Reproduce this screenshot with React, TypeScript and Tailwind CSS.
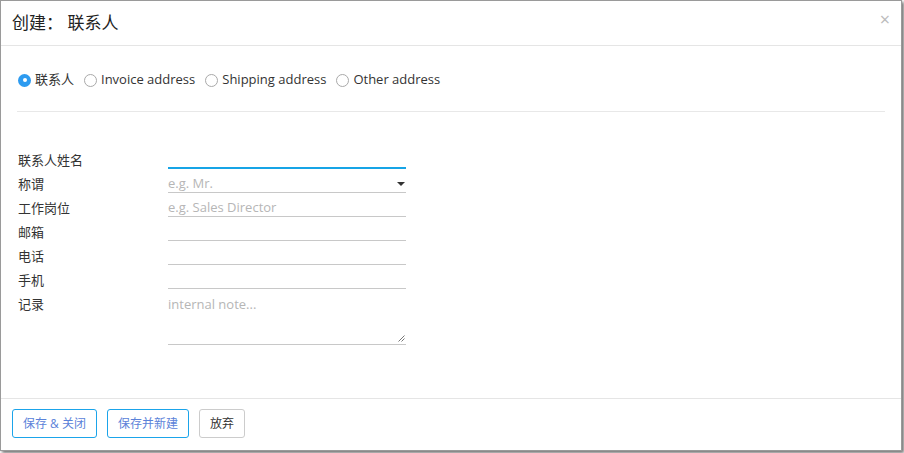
import React from "react";

const font = { fontFamily: '"Open Sans", "Noto Sans CJK SC", sans-serif' };

const Radio: React.FC<{ label: string; checked?: boolean }> = ({ label, checked }) => (
    <label className="flex items-center gap-[4px] mr-[10px]">
        {checked ? (
            <span className="w-[13px] h-[13px] rounded-full bg-[#2d9bf0] flex items-center justify-center">
                <span className="w-[4px] h-[4px] rounded-full bg-white" />
            </span>
        ) : (
            <span className="w-[13px] h-[13px] rounded-full border border-[#a9a9a9] bg-white" />
        )}
        <span>{label}</span>
    </label>
);

const Row: React.FC<{ label: string; children: React.ReactNode }> = ({ label, children }) => (
    <div className="flex">
        <div className="w-[150px] shrink-0 pt-[6px] leading-[18px]">{label}</div>
        <div className="w-[238px]">{children}</div>
    </div>
);

const Line: React.FC<{ placeholder?: string; active?: boolean; select?: boolean }> = ({
    placeholder,
    active,
    select,
}) => (
    <div
        className={
            active
                ? "h-[24px] border-b-2 border-[#16a4e6]"
                : "h-[24px] border-b border-[#c8c8c8] flex items-center justify-between pt-[6px]"
        }
    >
        {placeholder && <span className="text-[#b6b6b6]">{placeholder}</span>}
        {select && (
            <span className="w-0 h-0 border-l-[4px] border-r-[4px] border-t-[4px] border-l-transparent border-r-transparent border-t-[#333] mr-[1px]" />
        )}
    </div>
);

export default function App() {
    return (
        <div className="w-[904px] h-[453px] bg-white" style={font}>
            <div className="w-[902px] h-[451px] bg-white border border-[#9a9a9a] shadow-[2px_2px_3px_rgba(0,0,0,0.55)] flex flex-col text-[13px] text-[#333]">
                <div className="h-[45px] shrink-0 border-b border-[#e5e5e5] flex items-center justify-between pl-[11px] pr-[11px]">
                    <span className="text-[17px] text-[#222] leading-none -mt-[2px]">创建： 联系人</span>
                    <span className="text-[#bbb] text-[18px] leading-none -mt-[9px]">×</span>
                </div>
                <div className="flex-1 px-[16px]">
                    <div className="flex items-center h-[20px] mt-[24px] pl-[1px]">
                        <Radio label="联系人" checked />
                        <Radio label="Invoice address" />
                        <Radio label="Shipping address" />
                        <Radio label="Other address" />
                    </div>
                    <div className="mt-[21px] border-t border-[#e8e8e8]" />
                    <div className="mt-[33px] pl-[1px] flex flex-col">
                        <Row label="联系人姓名">
                            <Line active />
                        </Row>
                        <Row label="称谓">
                            <Line placeholder="e.g. Mr." select />
                        </Row>
                        <Row label="工作岗位">
                            <Line placeholder="e.g. Sales Director" />
                        </Row>
                        <Row label="邮箱">
                            <Line />
                        </Row>
                        <Row label="电话">
                            <Line />
                        </Row>
                        <Row label="手机">
                            <Line />
                        </Row>
                        <Row label="记录">
                            <div className="relative h-[56px] border-b border-[#c8c8c8] pt-[6px] leading-[18px] text-[#b6b6b6]">
                                internal note...
                                <svg className="absolute right-[1px] bottom-[2px]" width="7" height="7" viewBox="0 0 7 7">
                                    <path d="M6.5 0.5 L0.5 6.5 M6.5 3.5 L3.5 6.5" stroke="#777" strokeWidth="1" />
                                </svg>
                            </div>
                        </Row>
                    </div>
                </div>
                <div className="h-[52px] shrink-0 border-t border-[#e5e5e5] flex items-start gap-[10px] pl-[11px] pt-[10px] text-[12px]">
                    <button className="h-[29px] px-[10px] rounded-[3px] border border-[#1ba4ea] text-[#5b82d9] bg-white">
                        保存 &amp; 关闭
                    </button>
                    <button className="h-[29px] px-[10px] rounded-[3px] border border-[#1ba4ea] text-[#5b82d9] bg-white">
                        保存并新建
                    </button>
                    <button className="h-[29px] px-[10px] rounded-[3px] border border-[#ccc] text-[#333] bg-white">
                        放弃
                    </button>
                </div>
            </div>
        </div>
    );
}
